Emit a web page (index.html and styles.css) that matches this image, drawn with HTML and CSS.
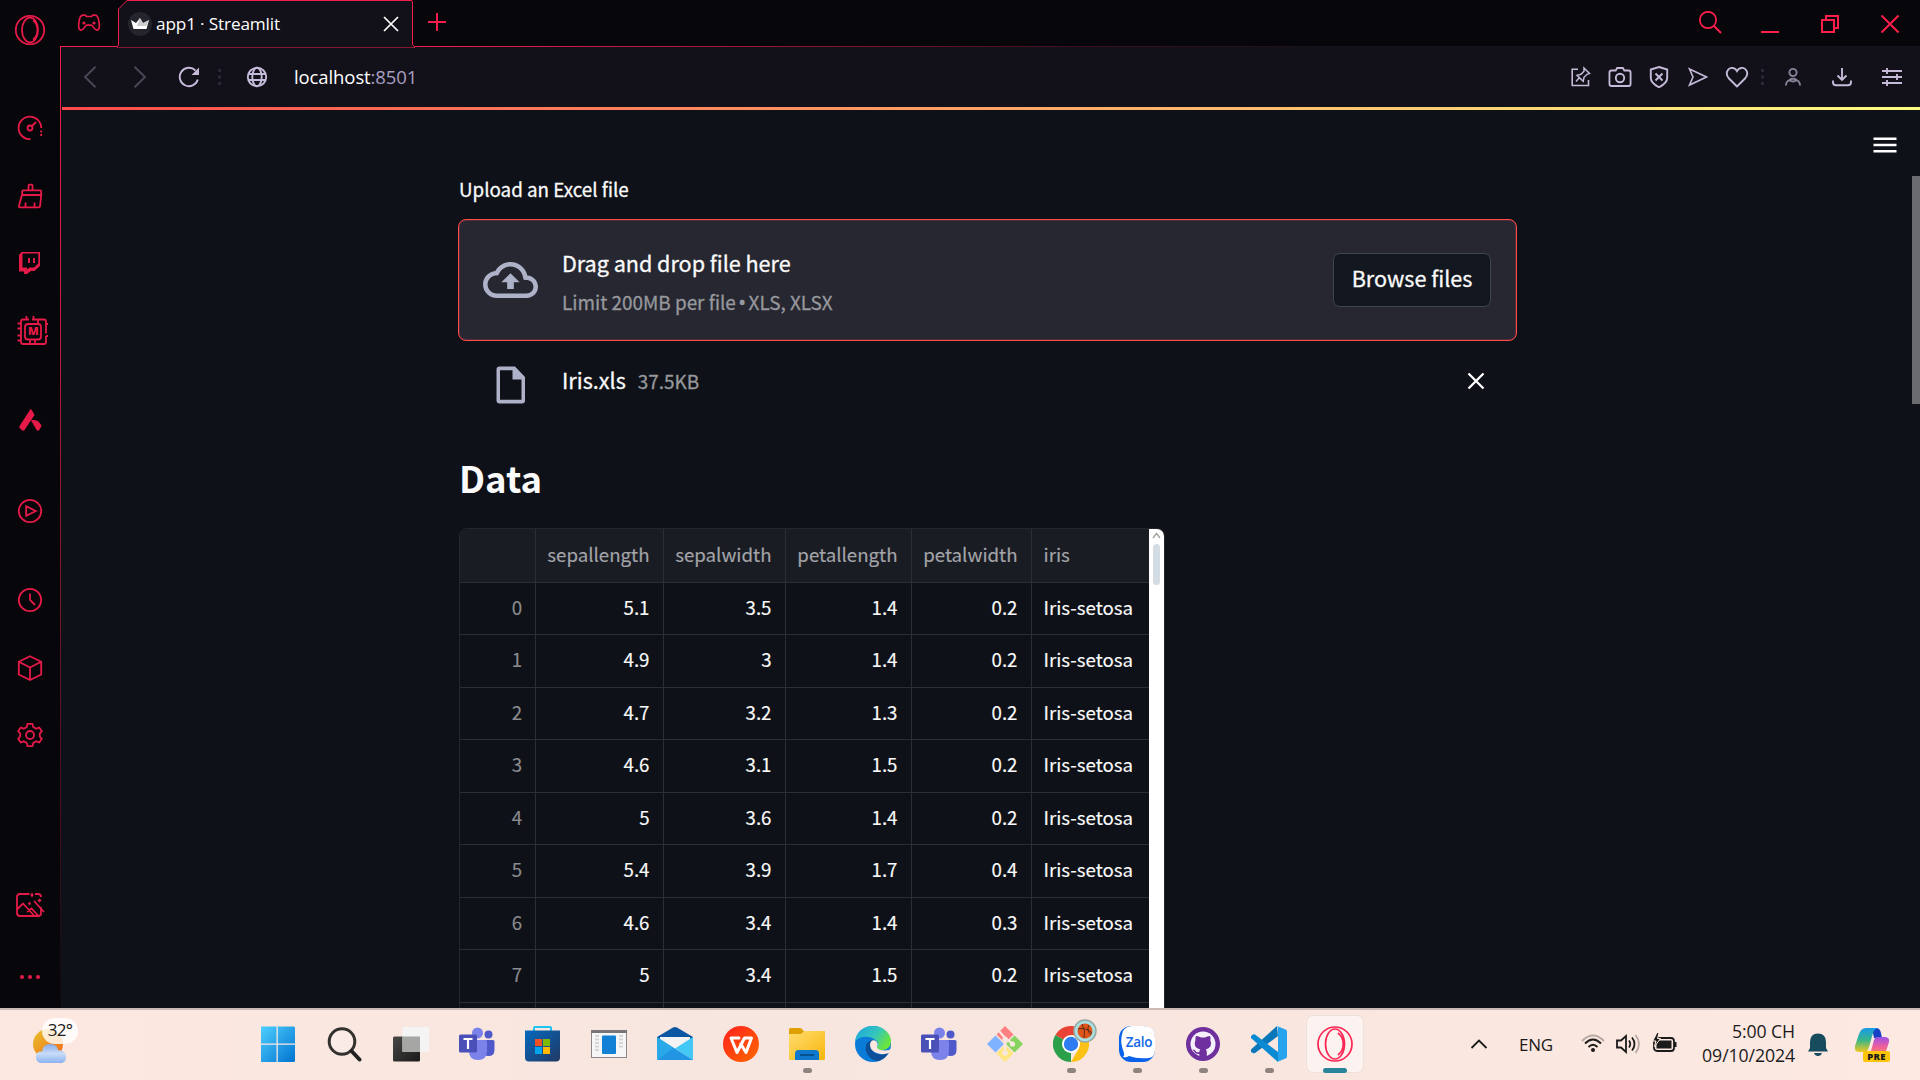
FILE: index.html
```html
<!DOCTYPE html>
<html lang="en">
<head>
<meta charset="utf-8">
<title>app1 · Streamlit</title>
<link rel="stylesheet" href="styles.css">
</head>
<body>
<div class="desktop">
  <div class="browser">
    <nav class="sidebar">
      <div class="side-logo"><svg width="32" height="32" viewBox="0 0 32 32"><circle cx="16" cy="16" r="14.2"/><ellipse cx="16" cy="16" rx="8" ry="12.4"/><path d="M19 6.5c6 4 6 15 0 19"/></svg></div>
      <div class="side-group first">
        <a class="side-item"><svg width="32" height="32" viewBox="0 0 32 32"><path d="M16.5 27.2A11.3 11.3 0 1 1 27.2 16"/><circle cx="16" cy="16" r="2.5"/><path d="M18 14l4-4"/><path d="M27.2 18.5v7" stroke-dasharray="2 1.6"/></svg></a>
        <a class="side-item"><svg width="32" height="32" viewBox="0 0 32 32"><path d="M14.5 10.500V5.700q0-1 1-1h2q1 0 1 1v4.800M8.200 15v-3.600q0-1 1-1h17q1 0 1 1V15zM7.900 15L5 26q-.4 1.300 1 1.300h18.600q1.300 0 1.500-1.300l1.100-11M11.500 27v-4.500M20.500 27v-4.500"/></svg></a>
        <a class="side-item"><svg width="32" height="32" viewBox="0 0 32 32"><path class="solid" fill-rule="evenodd" d="M7.500 5H26v14l-5.500 5H17l-4 3H10v-2.500H5V8zM8.500 6.600V20.500H13v2l2.500-2H20l4.300-4V6.600z"/><path class="solid" d="M14 11h2v5h-2zM19 11h2v5h-2z"/></svg></a>
        <a class="side-item"><svg width="36" height="36" viewBox="0 0 36 36"><path d="M17 6.500H11q-2 0-2 2V29q0 2 2 2h21q2 0 2-2v-6M20 6.500h12q2 0 2 2v12"/><rect x="13" y="11" width="16" height="15.500" rx="3"/><path d="M14.500 6V3M21.500 6V3M9 10.500H5.500M9 15.500H5.500M9 22.500H5.500M9 27.500H5.500M34 11h2.500M34 23h2.500M18 27v4M23 27v4M26 7v4"/></svg><span class="chip-letter">M</span></a>
      </div>
      <div class="side-group ads"><a class="side-item"><svg width="32" height="32" viewBox="0 0 32 32"><path class="solid" d="M16.600 5q1 0 4 6L10.500 26q-1.200 1.500-2.500.3L5.700 24q-1-1 0-2.300zM17 16.200q7-1.500 10.300 5 .4 1-.3 1.900l-2 3.200q-1.400 1-2.600-.6z"/></svg></a></div>
      <div class="side-group play"><a class="side-item"><svg width="32" height="32" viewBox="0 0 32 32"><circle cx="16" cy="16" r="11.200"/><path d="M12.200 11.300v9.400l9.600-4.700z"/></svg></a></div>
      <div class="side-group tools">
        <a class="side-item"><svg width="32" height="32" viewBox="0 0 32 32"><circle cx="16" cy="16" r="11.200"/><path d="M16 9.500V16l5 5"/></svg></a>
        <a class="side-item"><svg width="32" height="32" viewBox="0 0 32 32"><path d="M16 4.200l11.200 5.500V22.500L16 28 4.800 22.500V9.700zM4.800 9.700L16 15.500l11.200-5.800M16 15.500V28"/></svg></a>
        <a class="side-item"><svg width="32" height="32" viewBox="0 0 32 32"><path d="M13.500 4.800h5l.8 3.300 3 1.600 3-1.200 2.500 3.700-2 2.400v2.800l2 2.400-2.500 3.700-3-1.200-3 1.600-.8 3.300h-5l-.8-3.300-3-1.600-3 1.200-2.500-3.700 2-2.400v-2.800l-2-2.400 2.500-3.700 3 1.200 3-1.600z"/><circle cx="16" cy="16" r="4"/></svg></a>
      </div>
      <div class="side-group wall">
        <a class="side-item"><svg width="32" height="32" viewBox="0 0 32 32"><path d="M15.500 5H6q-3 0-3 3v16q0 3 3 3h18q3 0 3-2.500V18M21 5h3q3 0 3 3M3.500 20L9 14.500 20 26.500M13 23l4.500-3.500 6.500 7M20 12l10 11"/><path class="solid" d="M18 3.500l1.700 2.500L18 8.500 16.300 6zM25.500 9.500l2 2-2 2-2-2zM15.500 12.500l1.500 2-1.500 2-1.500-2z"/></svg></a>
      </div>
      <div class="side-group more"><a class="side-item"><svg width="32" height="32" viewBox="0 0 32 32"><circle class="solid" cx="8" cy="16" r="2"/><circle class="solid" cx="16" cy="16" r="2"/><circle class="solid" cx="24" cy="16" r="2"/></svg></a></div>
    </nav>
    <div class="edge"></div>

    <div class="window">
      <header class="tabstrip">
        <div class="gx"><svg width="24" height="18" viewBox="0 0 24 18"><path d="M6 1.200h2.200l1.300 1.300h5l1.300-1.300H18c3 0 3.700 3 4.200 8 .5 4.500.3 6.500-2 7-3 .5-4-5-6-5h-4.400c-2 0-3 5.500-6 5-2.300-.5-2.500-2.500-2-7 .5-5 1.200-8 4.200-8z"/><circle class="solid" cx="7" cy="9" r="1.600"/><circle class="solid" cx="17" cy="9" r="1.600"/></svg></div>
        <div class="tab">
          <svg class="tab-shape" width="298" height="48" viewBox="0 0 298 48"><path d="M0 48V46.500L1.500 45V9L10 .5H294q1.500 0 1.500 1.500V44.500l2 2V48z"/></svg>
          <span class="favicon"><svg width="20" height="14" viewBox="0 0 20 14"><path fill="#fff" d="M1 3l5 3 4-5 3 5 6-3-2.500 9h-13z"/><path fill="#aaa" d="M10 1l3 5 6-3-2.500 6H7z" opacity=".6"/></svg></span>
          <span class="tab-title">app1 · Streamlit</span>
          <svg class="tab-close" width="16" height="16" viewBox="0 0 16 16"><path d="M1 1l14 14M15 1L1 15"/></svg>
        </div>
        <div class="tab-rest">
          <svg class="plus" width="18" height="18" viewBox="0 0 18 18"><path d="M9 0v18M0 9h18"/></svg>
          <div class="win-controls">
            <svg width="24" height="24" viewBox="0 0 24 24"><circle cx="10" cy="9" r="8.200" stroke-width="1.700"/><path d="M16 15l7 7" stroke-width="2"/></svg>
            <svg width="18" height="18" viewBox="0 0 18 18"><path d="M0 17h18"/></svg>
            <svg width="18" height="18" viewBox="0 0 18 18"><path d="M1 5h12v12H1zM5 5V1h12v12h-4"/></svg>
            <svg width="18" height="18" viewBox="0 0 18 18"><path d="M.5.5l17 17M17.500.5l-17 17"/></svg>
          </div>
        </div>
      </header>

      <div class="toolbar">
        <div class="nav-buttons">
          <svg class="dim" width="14" height="22" viewBox="0 0 14 22"><path d="M12.500.8L2 11l10.500 10.200"/></svg>
          <svg class="dim" width="14" height="22" viewBox="0 0 14 22"><path d="M1.500.8L12 11 1.500 21.200"/></svg>
          <svg class="reload" width="22" height="22" viewBox="0 0 22 22"><path d="M19.800 13.500A9.200 9.200 0 1 1 17.500 4.500"/><path class="solid" d="M21 1.500v7.500h-7.500z"/></svg>
          <svg class="grip" width="3" height="16" viewBox="0 0 3 16"><path d="M0 1.500h3M0 8h3M0 14.500h3"/></svg>
          <svg class="globe" width="22" height="22" viewBox="0 0 22 22"><circle cx="11" cy="11" r="9.200"/><ellipse cx="11" cy="11" rx="4.700" ry="9.200"/><path d="M2.500 8h17M2.500 14h17"/></svg>
        </div>
        <div class="address">localhost<span>:8501</span></div>
        <div class="actions">
          <svg width="22" height="22" viewBox="0 0 22 22"><path d="M8 3.200H2.200v16.300h16.300V14" stroke-width="1.600"/><path d="M14 2l5.500 5.500-2.500.8-3 3-.8 4-6.200-6 4-1 3-3zM9.500 11.500L6 15.500" stroke-width="1.500"/></svg>
          <svg width="24" height="22" viewBox="0 0 24 22"><path d="M3 4.500h4.500L9 2h6l1.500 2.500H21q2 0 2 2V18q0 2-2 2H3q-2 0-2-2V6.500q0-2 2-2z" transform="translate(.5 0) scale(.96 1)"/><circle cx="12" cy="12" r="4.200"/></svg>
          <svg width="20" height="22" viewBox="0 0 20 22"><path d="M10 1l8.200 2.500V12q0 5-8.200 9.300Q1.800 17 1.800 12V3.500zM6.500 7.500l7 7M13.500 7.500l-7 7"/></svg>
          <svg width="22" height="20" viewBox="0 0 22 20"><path d="M3.500 2l17 8-17 8L7 10z" stroke-width="1.600"/></svg>
          <svg width="24" height="22" viewBox="0 0 24 22"><path d="M12 20.500L4 12.500C-1 7 3.500 1.200 8 2c2 .4 3.300 1.700 4 3 .7-1.300 2-2.600 4-3 4.500-.8 9 5 4 10.500z"/></svg>
          <svg class="grip" width="3" height="16" viewBox="0 0 3 16"><path d="M0 1.500h3M0 8h3M0 14.500h3"/></svg>
          <svg class="person" width="18" height="20" viewBox="0 0 18 20"><circle cx="9" cy="5.500" r="3.600"/><path d="M2 18.500q0-4 3.500-5.500 3.500 3 7 0 3.500 1.500 3.500 5.500M5.500 13q1.500-1.200 3.500-1.200t3.500 1.200"/></svg>
          <svg width="22" height="20" viewBox="0 0 22 20"><path d="M11 1v11M6.500 8.500L11 13l4.500-4.500M2 13.500v1.700q0 3 3 3h12q3 0 3-3v-1.700"/></svg>
          <svg width="22" height="20" viewBox="0 0 22 20"><path d="M1 4h20M1 10h20M1 16h20M6 1v6M16 7v6M6 13v6"/></svg>
        </div>
      </div>
      <div class="accent"></div>

      <main class="page">
        <svg class="burger" width="24" height="16" viewBox="0 0 24 16"><path d="M.5 1.700h23M.5 8h23M.5 14.300h23"/></svg>
        <div class="page-thumb"></div>
        <div class="column">
          <div class="label">Upload an Excel file</div>
          <section class="dropzone">
            <svg class="cloud" width="55" height="54" viewBox="0 0 24 24" preserveAspectRatio="none"><path d="M19.350 10.040C18.670 6.590 15.640 4 12 4 9.110 4 6.600 5.640 5.350 8.040 2.340 8.360 0 10.910 0 14c0 3.310 2.690 6 6 6h13c2.760 0 5-2.240 5-5 0-2.640-2.050-4.780-4.650-4.960zM19 18H6c-2.210 0-4-1.790-4-4 0-2.050 1.530-3.760 3.560-3.970l1.070-.11.5-.95C8.080 7.140 9.940 6 12 6c2.620 0 4.880 1.860 5.390 4.430l.3 1.500 1.530.11c1.560.1 2.780 1.410 2.780 2.960 0 1.650-1.350 3-3 3zM8 13h2.550v3h2.900v-3H16l-4-4z"/></svg>
            <div class="drop-text"><div class="drop-title">Drag and drop file here</div><div class="drop-hint">Limit 200MB per file <span class="dot">•</span> XLS, XLSX</div></div>
            <button class="browse">Browse files</button>
          </section>
          <div class="file">
            <svg class="doc" width="30" height="38" viewBox="0 0 30 38"><path fill-rule="evenodd" d="M3.500.5H19L29 11v23.500q0 3-3 3H3.500q-3 0-3-3v-31q0-3 3-3zM4 4.200v29.600h21.500V13.500H16.500V4.200z"/></svg>
            <span class="file-name">Iris.xls</span><span class="file-size">37.5KB</span>
            <svg class="remove" width="18" height="18" viewBox="0 0 18 18"><path d="M1.500 1.500l15 15M16.500 1.500l-15 15"/></svg>
          </div>
          <h2 class="heading">Data</h2>
          <div class="frame">
            <div class="grid">
              <div class="row head"><span></span><span>sepallength</span><span>sepalwidth</span><span>petallength</span><span>petalwidth</span><span>iris</span></div>
              <div class="row"><span>0</span><span>5.1</span><span>3.5</span><span>1.4</span><span>0.2</span><span>Iris-setosa</span></div>
              <div class="row"><span>1</span><span>4.9</span><span>3</span><span>1.4</span><span>0.2</span><span>Iris-setosa</span></div>
              <div class="row"><span>2</span><span>4.7</span><span>3.2</span><span>1.3</span><span>0.2</span><span>Iris-setosa</span></div>
              <div class="row"><span>3</span><span>4.6</span><span>3.1</span><span>1.5</span><span>0.2</span><span>Iris-setosa</span></div>
              <div class="row"><span>4</span><span>5</span><span>3.6</span><span>1.4</span><span>0.2</span><span>Iris-setosa</span></div>
              <div class="row"><span>5</span><span>5.4</span><span>3.9</span><span>1.7</span><span>0.4</span><span>Iris-setosa</span></div>
              <div class="row"><span>6</span><span>4.6</span><span>3.4</span><span>1.4</span><span>0.3</span><span>Iris-setosa</span></div>
              <div class="row"><span>7</span><span>5</span><span>3.4</span><span>1.5</span><span>0.2</span><span>Iris-setosa</span></div>
              <div class="row"><span></span><span></span><span></span><span></span><span></span><span></span></div>
            </div>
            <div class="vscroll"><svg width="9" height="7" viewBox="0 0 9 7"><path d="M1 6l3.500-4.500L8 6"/></svg><div class="vthumb"></div></div>
          </div>
        </div>
      </main>
    </div>
  </div>

  <footer class="taskbar">
    <div class="weather">
      <svg width="36" height="40" viewBox="0 0 36 40"><defs><linearGradient id="sun" x2="1" y2="1"><stop stop-color="#e8c22c"/><stop offset="1" stop-color="#f2661a"/></linearGradient><linearGradient id="cl" x2="0" y2="1"><stop stop-color="#87a9ea"/><stop offset=".5" stop-color="#c8dcf7"/><stop offset="1" stop-color="#8cb2f0"/></linearGradient></defs><circle cx="16" cy="17" r="15" fill="url(#sun)"/><path fill="url(#cl)" d="M10 36q-6 0-6-6t6-5.500Q11 17 18 17t8 6q8 0 8 7t-7 6z"/></svg>
      <span class="temp">32°</span>
    </div>
    <div class="apps">
      <div class="app"><svg viewBox="0 0 36 36"><defs><linearGradient id="win" x2="1" y2="1"><stop stop-color="#4fd0ff"/><stop offset="1" stop-color="#0173d0"/></linearGradient></defs><path transform="translate(-1.500 0)" fill="url(#win)" d="M2 .5h15V17.500H.5V2Q.5.500 2 .5zM18.300.5H34q1.500 0 1.500 1.500v15.500H18.300zM.5 18.800H17V36H2Q.5 36 .5 34.500zM18.300 18.800h17.200v15.700q0 1.500-1.500 1.500H18.300z"/></svg></div>
      <div class="app"><svg viewBox="0 0 36 36"><circle cx="15" cy="15.500" r="12.800" fill="#ffffff33" stroke="#33322f" stroke-width="3"/><path d="M24.500 25l8 8.500" stroke="#222" stroke-width="4" stroke-linecap="round"/></svg></div>
      <div class="app"><svg viewBox="0 0 36 36"><defs><linearGradient id="tv" x2="1" y2="1"><stop stop-color="#484846"/><stop offset="1" stop-color="#1a1a1a"/></linearGradient></defs><rect y="10.500" width="27" height="25" rx="1.500" fill="url(#tv)"/><rect x="9.500" y="1" width="26.500" height="25" rx="1" fill="#f4f4f4"/><path fill="#a6a6a4" d="M9.500 10.500H27V26H9.500z"/></svg></div>
      <div class="app"><svg viewBox="0 0 36 36"><g id="teams"><circle cx="18.500" cy="7" r="5.500" fill="#7b83eb"/><circle cx="29.500" cy="8.500" r="4" fill="#5059c9"/><path fill="#5059c9" d="M25 14h9q1.500 0 1.500 1.500V24q0 6-6 6t-6-6z"/><path fill="#7b83eb" d="M10 14h16.500q1.500 0 1.500 1.500V25q0 9-9 9t-9-9z"/><rect y="8.500" width="18" height="18" rx="1.500" fill="#4a50b8"/><path stroke="#fff" stroke-width="2.200" d="M4.500 13h9M9 13v10"/></g></svg></div>
      <div class="app"><svg viewBox="0 0 36 36"><defs><linearGradient id="st" x2="1" y2="1"><stop stop-color="#0669bd"/><stop offset="1" stop-color="#203864"/></linearGradient></defs><path d="M9 7V2Q9 1 10 1h15q1 0 1 1V7" fill="none" stroke="#1cc4f4" stroke-width="2"/><path fill="url(#st)" d="M0 4.500h35v27q0 4-4 4H4q-4 0-4-4z"/><path fill="#f25022" d="M10 13h7v7h-7z"/><path fill="#7fba00" d="M18 13h7v7h-7z"/><path fill="#00a4ef" d="M10 21h7v7h-7z"/><path fill="#ffb900" d="M18 21h7v7h-7z"/></svg></div>
      <div class="app"><svg viewBox="0 0 36 36"><rect x=".5" y="4.500" width="35" height="27" fill="#f6f6f6" stroke="#8b8988"/><path fill="#777" d="M0 4h36v3H0z"/><rect x="11" y="9.500" width="14" height="18.500" rx="1" fill="#1180d5"/><path stroke="#d5d5d5" stroke-width="1.800" d="M4 10h4M4 13.500h4M4 17h4M4 20.500h4M4 24h4M28 10h4M28 13.500h4M28 17h4M28 20.500h4"/></svg></div>
      <div class="app"><svg viewBox="0 0 36 36"><path fill="#0a56a3" d="M0 11L16 1.500q2-1 4 0L36 11v6H0z"/><path fill="#f3f3f3" d="M3 11h30v14H3z"/><path fill="#29a9e8" d="M0 11l18 11.500L36 34H1.500Q0 34 0 32.500z"/><path fill="#44c8f5" d="M36 11L18 22.500 36 34z"/><path fill="#1e8bdd" d="M16 22l20 12H0z" opacity=".6"/></svg></div>
      <div class="app"><svg viewBox="0 0 36 36"><defs><linearGradient id="wps" x2="1" y2="1"><stop stop-color="#ff1e1e"/><stop offset="1" stop-color="#ff6a00"/></linearGradient></defs><circle cx="18" cy="18" r="18" fill="url(#wps)"/><path d="M16 12H8l6 14.500L21.500 12h7l-5.500 14.500L17.800 18" fill="none" stroke="#fff" stroke-width="3" stroke-linejoin="round" stroke-linecap="round"/></svg></div>
      <div class="app run"><svg viewBox="0 0 36 36"><defs><linearGradient id="fo" x2="1" y2="1"><stop stop-color="#ffdc70"/><stop offset="1" stop-color="#f8b70d"/></linearGradient></defs><path fill="#dfa006" d="M0 3.500Q0 2 1.500 2H11q1 0 2 1l2.500 3v3H0z"/><path fill="url(#fo)" d="M0 8h12l3.500-3H36v27.500q0 1.500-1.500 1.500h-33Q0 34 0 32.500z"/><path fill="#0f77cc" d="M6 34v-6.500q0-3.500 3.500-3.500h17q3.500 0 3.500 3.500V34z"/><path stroke="#084d88" stroke-width="1.800" d="M11 29h14"/></svg></div>
      <div class="app"><svg viewBox="0 0 36 36"><defs><linearGradient id="ed" x2="1" y2=".5"><stop stop-color="#1aa4df"/><stop offset=".6" stop-color="#35c6bd"/><stop offset="1" stop-color="#6ae43f"/></linearGradient></defs><circle cx="18" cy="18" r="18" fill="#0b7bd8"/><path fill="url(#ed)" d="M0 16C1 6 8 0 18 0c11 0 18 8 18 15 0 6-4 9-9 9-4 0-6-1-5-3 2-3 1-6-3-8C13 9.500 4 10 0 16z"/><path fill="#0c4f98" d="M12 17c-4 8 2 17 11 18 5-1 9-5 11-9-8 5-18 2-18-6 0-3 1-5 3-6-3 0-5 1-7 3z"/><path fill="#f9e7e0" d="M15 19c0-4 3-6 6-4 2 2 2 4 1 6 0 3 7 4 12 3l3-2v3l-3 2C27 30 15 27 15 19z"/></svg></div>
      <div class="app"><svg viewBox="0 0 36 36"><use href="#teams"/></svg></div>
      <div class="app"><svg viewBox="0 0 36 36"><path fill="#ff8080" d="M18 0l8.500 8.500L18 17 9.500 8.500z"/><path fill="#80b3ff" d="M8.500 9.500L17 18l-8.500 8.500L0 18z"/><path fill="#87d35f" d="M27.500 9.500L36 18l-8.500 8.500L19 18z"/><path fill="#ffe680" d="M18 19l8.500 8.500L18 36l-8.500-8.500z"/><path fill="none" stroke="#f9e7e0" stroke-width="2.200" d="M12 5l6 7v16M18 12l8 6"/><g fill="#f9e7e0"><circle cx="18" cy="13" r="2.600"/><circle cx="25.500" cy="18" r="2.600"/><circle cx="18" cy="27" r="2.800"/></g></svg></div>
      <div class="app run"><svg viewBox="0 0 36 36"><path fill="#ea4335" d="M18 18L2.400 9A18 18 0 0 1 33.600 9z"/><path fill="#2c9f4b" d="M18 18L2.400 9a18 18 0 0 0 15.600 27z"/><path fill="#fbc116" d="M18 36l7.800-13.500L18 9h15.600A18 18 0 0 1 18 36z"/><circle cx="18" cy="18" r="9" fill="#fff"/><circle cx="18" cy="18" r="7.200" fill="#2f7cf0"/></svg><svg class="badge" viewBox="0 0 24 24"><circle cx="12" cy="12" r="11" fill="#a7dfe2" stroke="#9aa7a3" stroke-width="1.500"/><circle cx="12" cy="12" r="7.500" fill="#e0561a"/><path d="M5 10q8-2 14 4M9 5q4 7 2 14M16 6q-3 5 2 10" fill="none" stroke="#5d2b18"/></svg></div>
      <div class="app run"><svg viewBox="0 0 36 36"><rect width="36" height="36" rx="12" fill="#0b62ea"/><path fill="#fff" d="M14 0h10q12 0 12 12v12q0 7-6 8-12 1-20-2-3 2-6 1 2-2 1-4-5-12-1-22 3-5 10-5z"/></svg><span class="zalo">Zalo</span></div>
      <div class="app run"><svg viewBox="0 0 36 36"><circle cx="18" cy="18" r="17" fill="#6f2f9e"/><circle cx="18" cy="18" r="12.500" fill="#f5effa"/><path fill="#6f2f9e" d="M11 10q3 0 5 1.500h4Q22 10 25 10q1 2 .3 4 3 7-4.500 9.500 1 1 1 3V31h-7.500v-3q-4 .5-5.500-3l-1.500-1.500q3-.5 4 2.500 2 .5 3 0 0-1.500 1-2.500-8-2-4.800-9.500-.5-2 .5-4z"/></svg></div>
      <div class="app run"><svg viewBox="0 0 36 36"><path fill="#0877b9" d="M26 0L0 23.500q-1 1.500 0 2.500l2 1q1 .5 2 0L27 10z"/><path fill="#0a8ad2" d="M0 10l2-1.500q1-.5 2 0L27 26v10L.5 12.500Q-.5 11.500 0 10z"/><path fill="#27a3ee" d="M26 0l8.500 3.500Q36 4 36 5.500v25q0 1.500-1.500 2L26 36q1-.5 1-2V2q0-1.500-1-2z"/></svg></div>
      <div class="app run active"><svg viewBox="0 0 36 36"><g fill="none" stroke="#fb2452" stroke-width="1.700"><circle cx="18" cy="18" r="17"/><ellipse cx="18" cy="18" rx="9.500" ry="15"/><path d="M21 7c7 5 7 17 0 22"/></g></svg></div>
    </div>
    <div class="tray">
      <svg class="up" width="18" height="12" viewBox="0 0 18 12"><path d="M1.500 10L9 2.500l7.500 7.500"/></svg>
      <span class="lang">ENG</span>
      <svg class="wifi" width="24" height="20" viewBox="0 0 24 20"><path opacity=".3" d="M1 7Q12-4 23 7"/><path d="M4 9.500q8-8 16 0M7.500 13q4.500-4.500 9 0"/><circle cx="12" cy="16" r="2" fill="#1b1b1b" stroke="none"/></svg>
      <svg class="sound" width="26" height="22" viewBox="0 0 26 22"><path d="M2 7.500h4L11 3v16l-5-4.500H2zM14 7.500q2.500 3.500 0 7M17 4.500q5 6.500 0 13"/><path opacity=".3" d="M20.500 2q7 9 0 18"/></svg>
      <svg class="battery" width="26" height="22" viewBox="0 0 26 22"><rect x="2" y="5" width="20" height="13" rx="3"/><path fill="#1b1b1b" stroke="none" d="M4.500 7.500h15v8h-15zM22 9h2.500v5H22z"/><path fill="#1b1b1b" stroke="#fae7e0" stroke-width="1" d="M5-.5L.8 8H4L2.500 13.500 8.500 5.500H5.500L7-.5z"/></svg>
      <div class="clock"><div>5:00 CH</div><div>09/10/2024</div></div>
      <svg class="bell" width="20" height="24" viewBox="0 0 20 24"><path fill="#164c5d" d="M10 .5q8 0 8 8.500v6l2 3.500H0L2 15V9q0-8.500 8-8.500zM6 20h8q-1 3-4 3t-4-3z"/></svg>
      <div class="copilot"><svg width="36" height="32" viewBox="0 0 36 32"><defs><linearGradient id="c1" x2="0" y2="1"><stop stop-color="#189bea"/><stop offset=".5" stop-color="#38b58a"/><stop offset="1" stop-color="#f0ca1f"/></linearGradient><linearGradient id="c2" x2="0" y2="1"><stop stop-color="#9a51e8"/><stop offset=".5" stop-color="#ee5f9d"/><stop offset="1" stop-color="#ff8a4c"/></linearGradient></defs><path fill="#1542c4" d="M17 0h4q4 0 5 5l1 5h-8z"/><path fill="url(#c2)" d="M22 9h7q6 0 5 5l-3 9q-1 5-6 5H11q4-1 5-5l3-11q1-3 3-3z"/><path fill="url(#c1)" d="M11 0h12q-4 1-5 5l-4 14q-1 5-5 5H4q-5 0-4-6L4 6q2-6 7-6z"/></svg><span class="pre">PRE</span></div>
    </div>
  </footer>
</div>
</body>
</html>
```
FILE: styles.css
```css
* { box-sizing: border-box; }
body { margin: 0; background: #0e1117; overflow: hidden; }
svg { display: block; flex: none; }
.desktop { width: 1920px; height: 1080px; display: flex; flex-direction: column; font-family: "Open Sans", "Noto Sans", sans-serif; }
.browser { height: 1008px; display: flex; overflow: hidden; background: #07070b; }

/* Left sidebar */
.sidebar { width: 60px; display: flex; flex-direction: column; }
.sidebar svg { fill: none; stroke: #e51a48; stroke-width: 1.8; }
.sidebar .solid { fill: #e51a48; stroke: none; }
.side-logo { height: 94.5px; padding: 14px 0 0 14px; flex: none; }
.side-item { height: 67.5px; display: flex; align-items: center; justify-content: center; position: relative; }
.side-group { flex: none; }
.chip-letter { position: absolute; left: 28px; top: 26px; color: #e51a48; font: 800 11px/16px "Open Sans", sans-serif; }
.ads { margin-top: 22px; }
.play { margin-top: 23px; }
.tools { margin-top: 22px; }
.wall { margin-top: 102px; }
.more { margin-top: 5px; }
.edge { width: 2px; margin-top: 46px; border-left: 1px solid; border-image: linear-gradient(#f51d4c, #d21b43 25%, #8a1730 50%, #2a0d16 90%, #0b080c) 1; background: #0e1117; }

/* Tab strip */
.window { width: 1858px; display: flex; flex-direction: column; }
.tabstrip { height: 47px; display: flex; }
.gx { width: 57px; margin-left: -1px; border-bottom: 1px solid #f51d4c; padding: 14px 0 0 16px; }
.gx svg { fill: none; stroke: #e51a48; stroke-width: 1.7; }
.gx .solid { fill: #e51a48; stroke: none; }
.tab { width: 297px; position: relative; display: flex; align-items: center; padding: 0 16px 0 10px; }
.tab-shape { position: absolute; left: -1px; top: 0; fill: #12111a; stroke: #f51d4c; }
.favicon { position: relative; width: 24px; height: 24px; border-radius: 50%; background: #24242d; display: flex; align-items: center; justify-content: center; }
.tab-title { position: relative; margin-left: 4px; flex: 1; font-size: 17.2px; letter-spacing: -.15px; line-height: 24px; color: #fff; white-space: nowrap; }
.tab-close { position: relative; stroke: #fff; stroke-width: 1.7; }
.tab-rest { flex: 1; display: flex; align-items: flex-start; justify-content: space-between; padding: 13px 21px 0 13px; border-bottom: 1px solid; border-image: linear-gradient(90deg, #f51d4c, #b0183a 18%, #4a0f20 40%, #12111a 62%) 1; }
.plus { stroke: #f51d4c; stroke-width: 2; }
.win-controls { display: flex; gap: 42px; align-items: center; fill: none; stroke: #ff1f4b; stroke-width: 2; margin-top: -2px; }
.win-controls svg:nth-child(n+2) { margin-top: 2px; }
.win-controls svg:first-child { margin-right: -3px; }

/* Address bar */
.toolbar { height: 60px; background: #12111a; display: flex; align-items: center; color: #c5bedc; }
.toolbar svg { fill: none; stroke: #c5bad8; stroke-width: 1.9; }
.toolbar .solid { fill: #c5bad8; stroke: none; }
.toolbar .dim { stroke: #4b4756; }
.toolbar .grip { stroke: #2b2838; stroke-width: 3; }
.nav-buttons { width: 232px; display: flex; align-items: center; padding-left: 21px; }
.nav-buttons svg:nth-child(2) { margin-left: 36px; }
.nav-buttons .reload { margin-left: 31px; }
.nav-buttons .grip { margin-left: 18px; }
.nav-buttons .globe { margin-left: 25px; }
.address { flex: 1; font-size: 18.500px; letter-spacing: -.1px; line-height: 24px; color: #fff; }
.address span { color: #a99fc0; }
.actions { display: flex; align-items: center; gap: 17px; padding-right: 17px; }
.actions .grip { margin-left: -5px; margin-right: 3px; }
.toolbar .person { stroke: #8a8299; margin-right: 12px; }
.actions svg:nth-child(1) { margin-right: -1px; }
.actions svg:last-child { margin-left: 11px; }
.accent { height: 3px; background: linear-gradient(90deg, #ff4b4b, #fffd80); }

/* Page content */
.page { flex: 1; min-height: 0; background: #0e1117; position: relative; overflow: hidden; color: #fafafa; font-family: "Noto Sans CJK SC", "Noto Sans", sans-serif; -webkit-text-stroke: .3px; }
.burger { position: absolute; right: 23px; top: 27px; stroke: #fff; stroke-width: 2.500; }
.page-thumb { position: absolute; right: 0; top: 66px; width: 8px; height: 228px; background: #6b6c70; }
.column { width: 1057px; margin-left: 397px; padding-top: 64px; }
.label { height: 30px; line-height: 30px; font-size: 18.800px; }
.dropzone { height: 122px; margin: 15px 0 0 -1px; width: 1059px; padding: 0 25px 0 24px; display: flex; align-items: center; background: #262730; border: 1px solid #ff4b4b; border-radius: 8px; box-shadow: inset 0 0 0 1px #ff4b4b30; }
.cloud { fill: #aeb2c8; }
.drop-text { flex: 1; margin-left: 24px; padding-top: 7px; }
.drop-title { font-size: 21.600px; line-height: 36px; margin-top: -1px; letter-spacing: -.03px; }
.drop-hint { font-size: 18.900px; line-height: 41px; color: #97989d; }
.dot { font-family: "Open Sans", sans-serif; font-size: 22px; line-height: 1; margin: 0 -2px; }
.browse { width: 158px; height: 54px; padding: 0 0 4px; background: #131720; border: 1px solid #41444c; border-radius: 7px; color: #fafafa; font: inherit; font-size: 21.600px; line-height: 46px; -webkit-text-stroke: .3px; }
.file { height: 76px; display: flex; align-items: center; padding: 0 31px 0 37px; }
.doc { fill: #aeb2c8; margin-top: 11px; }
.file-name { font-size: 21.600px; line-height: 36px; margin-left: 36px; margin-top: 2px; }
.file-size { font-size: 18.900px; line-height: 36px; margin-left: 12px; flex: 1; color: #97989d; margin-top: 4px; }
.remove { stroke: #fff; stroke-width: 2.300; margin-top: 3px; }
.heading { margin: 31px 0 0; height: 60px; line-height: 60px; font-size: 36.500px; font-weight: 700; -webkit-text-stroke: 0; }
.frame { margin-top: 20px; width: 706px; height: 600px; display: flex; border: 1px solid #24262d; border-radius: 8px 8px 0 0; overflow: hidden; -webkit-text-stroke: .15px; }
.row { display: grid; grid-template-columns: 76px 127.500px 122px 126px 120px 117.500px; height: 52.500px; font-size: 18.700px; }
.row span { border-right: 1px solid #2c2e35; border-bottom: 1px solid #2c2e35; text-align: right; padding-right: 13px; line-height: 47px; }
.row span:first-child { color: #8a8b90; }
.row span:last-child { text-align: left; padding: 0 0 0 12px; border-right: 0; }
.head { height: 53.500px; background: #1a1c24; color: #a3a4a8; }
.row.head span { line-height: 49px; }
.vscroll { flex: 1; background: #fff; display: flex; flex-direction: column; align-items: center; padding-top: 3px; }
.vscroll svg { fill: none; stroke: #a5a5a5; stroke-width: 1.500; }
.vthumb { width: 7px; height: 41px; margin-top: 5px; border-radius: 4px; background: #d3dbe3; }

/* Taskbar */
.taskbar { height: 72px; border-top: 2px solid #c9bab6; background: linear-gradient(90deg, #fde8e1, #f7e6df 35%, #f8e6df 65%, #fde9e2); display: flex; color: #1b1b1b; }
.weather { width: 246px; padding: 17px 0 0 32px; position: relative; }
.temp { position: absolute; left: 42px; top: 8px; width: 36px; height: 26px; border-radius: 13px; background: #fffc; font-size: 17px; line-height: 24px; letter-spacing: -.8px; text-align: center; }
.apps { width: 1122px; display: flex; }
.app { width: 66px; display: flex; justify-content: center; padding-top: 16px; position: relative; }
.app > svg { width: 36px; height: 36px; fill: none; position: relative; }
.run::after { content: ""; position: absolute; left: 29px; top: 58px; width: 9px; height: 5px; border-radius: 3px; background: #8e837f; }
.active::before { content: ""; position: absolute; left: 5px; top: 6px; width: 56px; height: 56px; border-radius: 6px; background: #fcf3f0; box-shadow: 0 0 0 1px #eee0da; }
.active::after { left: 21px; width: 24px; background: #29849a; }
.app .badge { position: absolute; left: 35px; top: 9px; width: 24px; height: 24px; }
.zalo { position: absolute; left: 17px; width: 36px; text-align: center; top: 22px; font: 600 13.500px/20px "Open Sans", sans-serif; letter-spacing: -.3px; color: #1468e8; }
.tray { flex: 1; display: flex; align-items: center; height: 68px; font-size: 17px; }
.tray > svg { fill: none; stroke: #1b1b1b; stroke-width: 1.800; }
.up { margin-left: 102px; }
.lang { margin-left: 31px; width: 36px; letter-spacing: -.2px; }
.wifi { margin-left: 26px; }
.sound { margin-left: 10px; }
.battery { margin-left: 11px; }
.clock { width: 117px; text-align: right; line-height: 24px; font-size: 17.700px; letter-spacing: -.1px; margin-top: -2px; }
.tray > .bell { margin-left: 13px; margin-top: 2px; stroke: none; }
.copilot { position: relative; width: 36px; margin-left: 27px; }
.pre { position: absolute; left: 8px; top: 23px; width: 27px; height: 11px; border-radius: 2px; background: #fcc50a; font-size: 9.500px; font-weight: 800; line-height: 11px; text-align: center; letter-spacing: .3px; }
```
